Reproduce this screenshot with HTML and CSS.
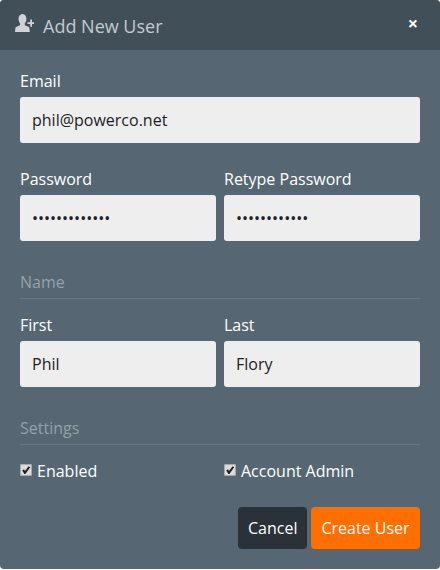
FILE: index.html
```html
<!DOCTYPE html>
<html lang="en">
<head>
<meta charset="utf-8">
<title>Add New User</title>
<link rel="stylesheet" href="styles.css">
</head>
<body>
<div class="modal">
  <header class="head">
    <svg class="user-icon" viewBox="0 0 19 18" width="19" height="18" aria-hidden="true"><path d="M7.5 0C10 0 11.4 2.2 11.4 5C11.4 6.9 10.7 8.3 9.8 9.3V10.8C10 11.6 11.1 12 12.6 12.5C13.8 12.9 14.4 13.5 14.5 14.5L14.8 18H0L0.3 14.5C0.4 13.5 1.1 12.9 2.3 12.5C3.8 12 4.9 11.6 5.1 10.8V9.3C4.2 8.3 3.5 6.9 3.5 5C3.5 2.2 5 0 7.5 0Z"/><path d="M12.4 8.2H15.2V5.4H17V8.2H19.5V10H17V12.8H15.2V10H12.4Z"/></svg>
    <h1 class="title">Add New User</h1>
    <span class="close">×</span>
  </header>
  <form class="body">
    <label class="field field-email">
      <span class="label">Email</span>
      <input class="input" type="text" value="phil@powerco.net">
    </label>
    <div class="row row-pass">
      <label class="field"><span class="label">Password</span><input class="input" type="password" value="philflory1234"></label>
      <label class="field"><span class="label">Retype Password</span><input class="input" type="password" value="philflory123"></label>
    </div>
    <div class="section">Name</div>
    <div class="row">
      <label class="field"><span class="label">First</span><input class="input" type="text" value="Phil"></label>
      <label class="field"><span class="label">Last</span><input class="input" type="text" value="Flory"></label>
    </div>
    <div class="section">Settings</div>
    <div class="row checks">
      <label class="check"><span class="box"><svg viewBox="0 0 12 12" width="12" height="12" aria-hidden="true"><path d="M2.2 6.4L4 5.2L5 7L8.6 2.2L10.2 3.2L5.4 10H4.4Z"/></svg></span><span>Enabled</span></label>
      <label class="check"><span class="box"><svg viewBox="0 0 12 12" width="12" height="12" aria-hidden="true"><path d="M2.2 6.4L4 5.2L5 7L8.6 2.2L10.2 3.2L5.4 10H4.4Z"/></svg></span><span>Account Admin</span></label>
    </div>
    <div class="actions">
      <button class="btn btn-cancel" type="button">Cancel</button>
      <button class="btn btn-create" type="button">Create User</button>
    </div>
  </form>
</div>
</body>
</html>
```
FILE: styles.css
```css
html, body {
  margin: 0;
  padding: 0;
  background: #fff;
}
body {
  font-family: "Open Sans", sans-serif;
  font-size: 16px;
  width: 440px;
  height: 570px;
  overflow: hidden;
}
.modal {
  width: 440px;
  height: 569px;
  background: #566773;
  border-radius: 4px;
  overflow: hidden;
  box-sizing: border-box;
}
.head {
  height: 50px;
  background: #414f59;
  display: flex;
  align-items: center;
  padding: 0 20px 0 15px;
  box-sizing: border-box;
}
.user-icon {
  fill: #cfd4d8;
  margin-right: 9px;
  margin-bottom: 5px;
}
.title {
  margin: 0;
  font-size: 18px;
  font-weight: 400;
  color: #c4cacf;
  flex: 1;
  line-height: 26px;
  padding-top: 2px;
}
.close {
  color: #fff;
  font-weight: 700;
  font-size: 18px;
  line-height: 18px;
  padding-bottom: 4px;
  margin-right: 2px;
}
.body {
  padding: 20px 20px 0;
  display: flex;
  flex-direction: column;
}
.field {
  display: flex;
  flex-direction: column;
  min-width: 0;
}
.label {
  color: #fff;
  line-height: 22px;
  margin-bottom: 5px;
}
.input {
  display: block;
  width: 100%;
  height: 46px;
  box-sizing: border-box;
  background: #eee;
  border: 0;
  border-radius: 3px;
  padding: 0 12px;
  font: inherit;
  color: #1c2126;
  outline: 0;
}
.row {
  display: grid;
  grid-template-columns: 196px 196px;
  column-gap: 8px;
}
.row-pass {
  margin-top: 25px;
}
.section {
  color: #94a1aa;
  line-height: 22px;
  margin-top: 30px;
  padding-bottom: 5px;
  border-bottom: 1px solid #677782;
  margin-bottom: 15px;
}
.check {
  display: flex;
  align-items: center;
  color: #fff;
  line-height: 22px;
}
.box {
  display: flex;
  align-items: center;
  justify-content: center;
  width: 12px;
  height: 12px;
  margin: 0 5px 3px 0;
  background: #dcdcdc;
  border-radius: 2px;
  box-shadow: inset 0 0 0 1px #a9a9a9;
}
.box svg {
  fill: #222;
}
.actions {
  display: flex;
  justify-content: flex-end;
  gap: 4px;
  margin-top: 25px;
}
.btn {
  height: 42px;
  border: 0;
  border-radius: 4px;
  font: inherit;
  color: #fff;
  padding: 0 10px;
}
.btn-cancel {
  background: #2a3138;
  width: 69px;
}
.btn-create {
  background: #ff6f00;
  width: 109px;
}
```
